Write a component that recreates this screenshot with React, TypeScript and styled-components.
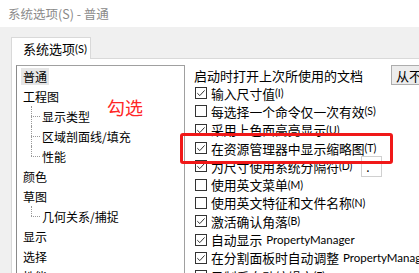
import React from 'react';
import styled, { createGlobalStyle } from 'styled-components';

const Global = createGlobalStyle`
  html, body { margin: 0; padding: 0; background: #fff; }
  body { font-family: "Noto Sans CJK SC", "Microsoft YaHei", sans-serif; }
  * { box-sizing: border-box; }
`;

const Window = styled.div`
  position: relative;
  width: 419px;
  height: 273px;
  overflow: hidden;
  background: #fff;
  display: flex;
  flex-direction: column;
`;

const TitleBar = styled.div`
  height: 27px;
  flex: none;
  display: flex;
  align-items: center;
  padding-left: 8px;
  font-size: 12.5px;
  color: #8a8a8a;
  white-space: pre;
`;

const Body = styled.div`
  flex: 1;
  min-height: 0;
  background: #f0f0f0;
  padding: 10px 0 0 11px;
  display: flex;
  flex-direction: column;
`;

const TabRow = styled.div`
  position: relative;
  z-index: 1;
  display: flex;
  height: 21px;
  flex: none;
`;

const Tab = styled.div`
  width: 80px;
  height: 22px;
  background: #fff;
  border: 1px solid #d9d9d9;
  border-bottom: none;
  padding-left: 11px;
  display: flex;
  align-items: center;
  font-size: 13px;
  color: #000;
`;

const Mn = styled.span<{ $size?: number }>`
  font-family: "Lato", "Noto Sans CJK SC", sans-serif;
  font-size: ${(p) => p.$size ?? 10.5}px;
`;

const Latin = styled.span`
  font-family: "Lato", "Noto Sans CJK SC", sans-serif;
  font-size: 11.5px;
  margin-left: 4px;
`;

const Panel = styled.div`
  flex: 1;
  min-height: 0;
  background: #fff;
  border-top: 1px solid #d9d9d9;
  border-left: 1px solid #d9d9d9;
  padding: 6px 0 0 4px;
  display: flex;
  align-items: flex-start;
`;

const ListBox = styled.div`
  flex: none;
  width: 169px;
  height: 260px;
  border: 1px solid #a0a0a0;
  border-left-color: #8a8a8a;
  display: flex;
  flex-direction: column;
  font-size: 12px;
  color: #000;
`;

const TreeRow = styled.div<{ $child?: boolean; $last?: boolean }>`
  position: relative;
  height: 20px;
  flex: none;
  display: flex;
  align-items: center;
  padding-left: ${(p) => (p.$child ? 25 : 6)}px;

  ${(p) =>
    p.$child
      ? `
    &::before {
      content: '';
      position: absolute;
      left: 14px;
      top: 0;
      height: ${p.$last ? '50%' : '100%'};
      border-left: 1px dotted #9a9a9a;
    }
    &::after {
      content: '';
      position: absolute;
      left: 14px;
      top: 50%;
      width: 9px;
      border-top: 1px dotted #9a9a9a;
    }
  `
      : ''}
`;

const TreeLabel = styled.span<{ $selected?: boolean }>`
  line-height: 17px;
  padding: 0 2px;
  margin-left: -2px;
  background: ${(p) => (p.$selected ? '#e6e6e6' : 'transparent')};
  white-space: nowrap;
`;

const RightCol = styled.div`
  flex: none;
  margin-left: 9px;
  margin-top: 1px;
  display: flex;
  flex-direction: column;
  white-space: nowrap;
  color: #000;
`;

const HeadRow = styled.div`
  height: 18px;
  display: flex;
  align-items: center;
  font-size: 13px;
`;

const Dropdown = styled.div`
  margin-left: 28px;
  width: 60px;
  height: 20px;
  flex: none;
  border: 1px solid #adadad;
  background: #ececec;
  display: flex;
  align-items: center;
  padding-left: 4px;
  font-size: 13px;
`;

const CheckRow = styled.div`
  height: 18.3px;
  flex: none;
  display: flex;
  align-items: center;
  font-size: 12.8px;
  padding-left: 1px;
`;

const Box = styled.svg`
  flex: none;
  width: 12px;
  height: 12px;
  margin-right: 4px;
`;

const SepInput = styled.div`
  flex: none;
  margin-left: 9px;
  width: 21px;
  height: 21px;
  border: 1px solid #d0d0d0;
  background: #fff;
  font-size: 12px;
  padding-left: 4px;
  display: flex;
  align-items: center;
`;

const Highlight = styled.div`
  position: absolute;
  left: 180px;
  top: 133px;
  width: 213px;
  height: 31px;
  border: 3px solid #f01818;
  border-radius: 3px;
  pointer-events: none;
`;

const Note = styled.div`
  position: absolute;
  left: 107px;
  top: 95px;
  font-size: 18px;
  line-height: 24px;
  color: #ff2626;
`;

const CheckBox: React.FC<{ checked?: boolean }> = ({ checked }) => (
  <Box viewBox="0 0 12 12">
    <rect x="0.5" y="0.5" width="11" height="11" fill="#fff" stroke="#333" strokeWidth="1" />
    {checked && (
      <polyline points="2.3,6.2 4.8,8.6 9.6,3.4" fill="none" stroke="#333" strokeWidth="1" />
    )}
  </Box>
);

type Item = { label: string; latin?: string; mn?: string; checked: boolean; extra?: React.ReactNode };

const items: Item[] = [
  { label: '输入尺寸值', mn: '(I)', checked: true },
  { label: '每选择一个命令仅一次有效', mn: '(S)', checked: false },
  { label: '采用上色面高亮显示', mn: '(U)', checked: true },
  { label: '在资源管理器中显示缩略图', mn: '(T)', checked: true },
  { label: '为尺寸使用系统分隔符', mn: '(D)', checked: true, extra: <SepInput>.</SepInput> },
  { label: '使用英文菜单', mn: '(M)', checked: false },
  { label: '使用英文特征和文件名称', mn: '(N)', checked: false },
  { label: '激活确认角落', mn: '(B)', checked: true },
  { label: '自动显示', latin: 'PropertyManager', checked: true },
  { label: '在分割面板时自动调整', latin: 'PropertyManager', checked: true },
  { label: '录制后自动编辑宏', mn: '(E)', checked: false },
];

type Node = { label: string; child?: boolean; last?: boolean; selected?: boolean };

const tree: Node[] = [
  { label: '普通', selected: true },
  { label: '工程图' },
  { label: '显示类型', child: true },
  { label: '区域剖面线/填充', child: true },
  { label: '性能', child: true, last: true },
  { label: '颜色' },
  { label: '草图' },
  { label: '几何关系/捕捉', child: true, last: true },
  { label: '显示' },
  { label: '选择' },
  { label: '性能' },
];

export default function App() {
  return (
    <>
      <Global />
      <Window>
        <TitleBar>系统选项(S) - 普通</TitleBar>
        <Body>
          <TabRow>
            <Tab>
              系统选项<Mn $size={11}>(S)</Mn>
            </Tab>
          </TabRow>
          <Panel>
            <ListBox>
              {tree.map((n, i) => (
                <TreeRow key={i} $child={n.child} $last={n.last}>
                  <TreeLabel $selected={n.selected}>{n.label}</TreeLabel>
                </TreeRow>
              ))}
            </ListBox>
            <RightCol>
              <HeadRow>
                启动时打开上次所使用的文档
                <Dropdown>从不</Dropdown>
              </HeadRow>
              {items.map((it, i) => (
                <CheckRow key={i}>
                  <CheckBox checked={it.checked} />
                  {it.label}
                  {it.latin && <Latin>{it.latin}</Latin>}
                  {it.mn && <Mn>{it.mn}</Mn>}
                  {it.extra}
                </CheckRow>
              ))}
            </RightCol>
          </Panel>
        </Body>
        <Note>勾选</Note>
        <Highlight />
      </Window>
    </>
  );
}
